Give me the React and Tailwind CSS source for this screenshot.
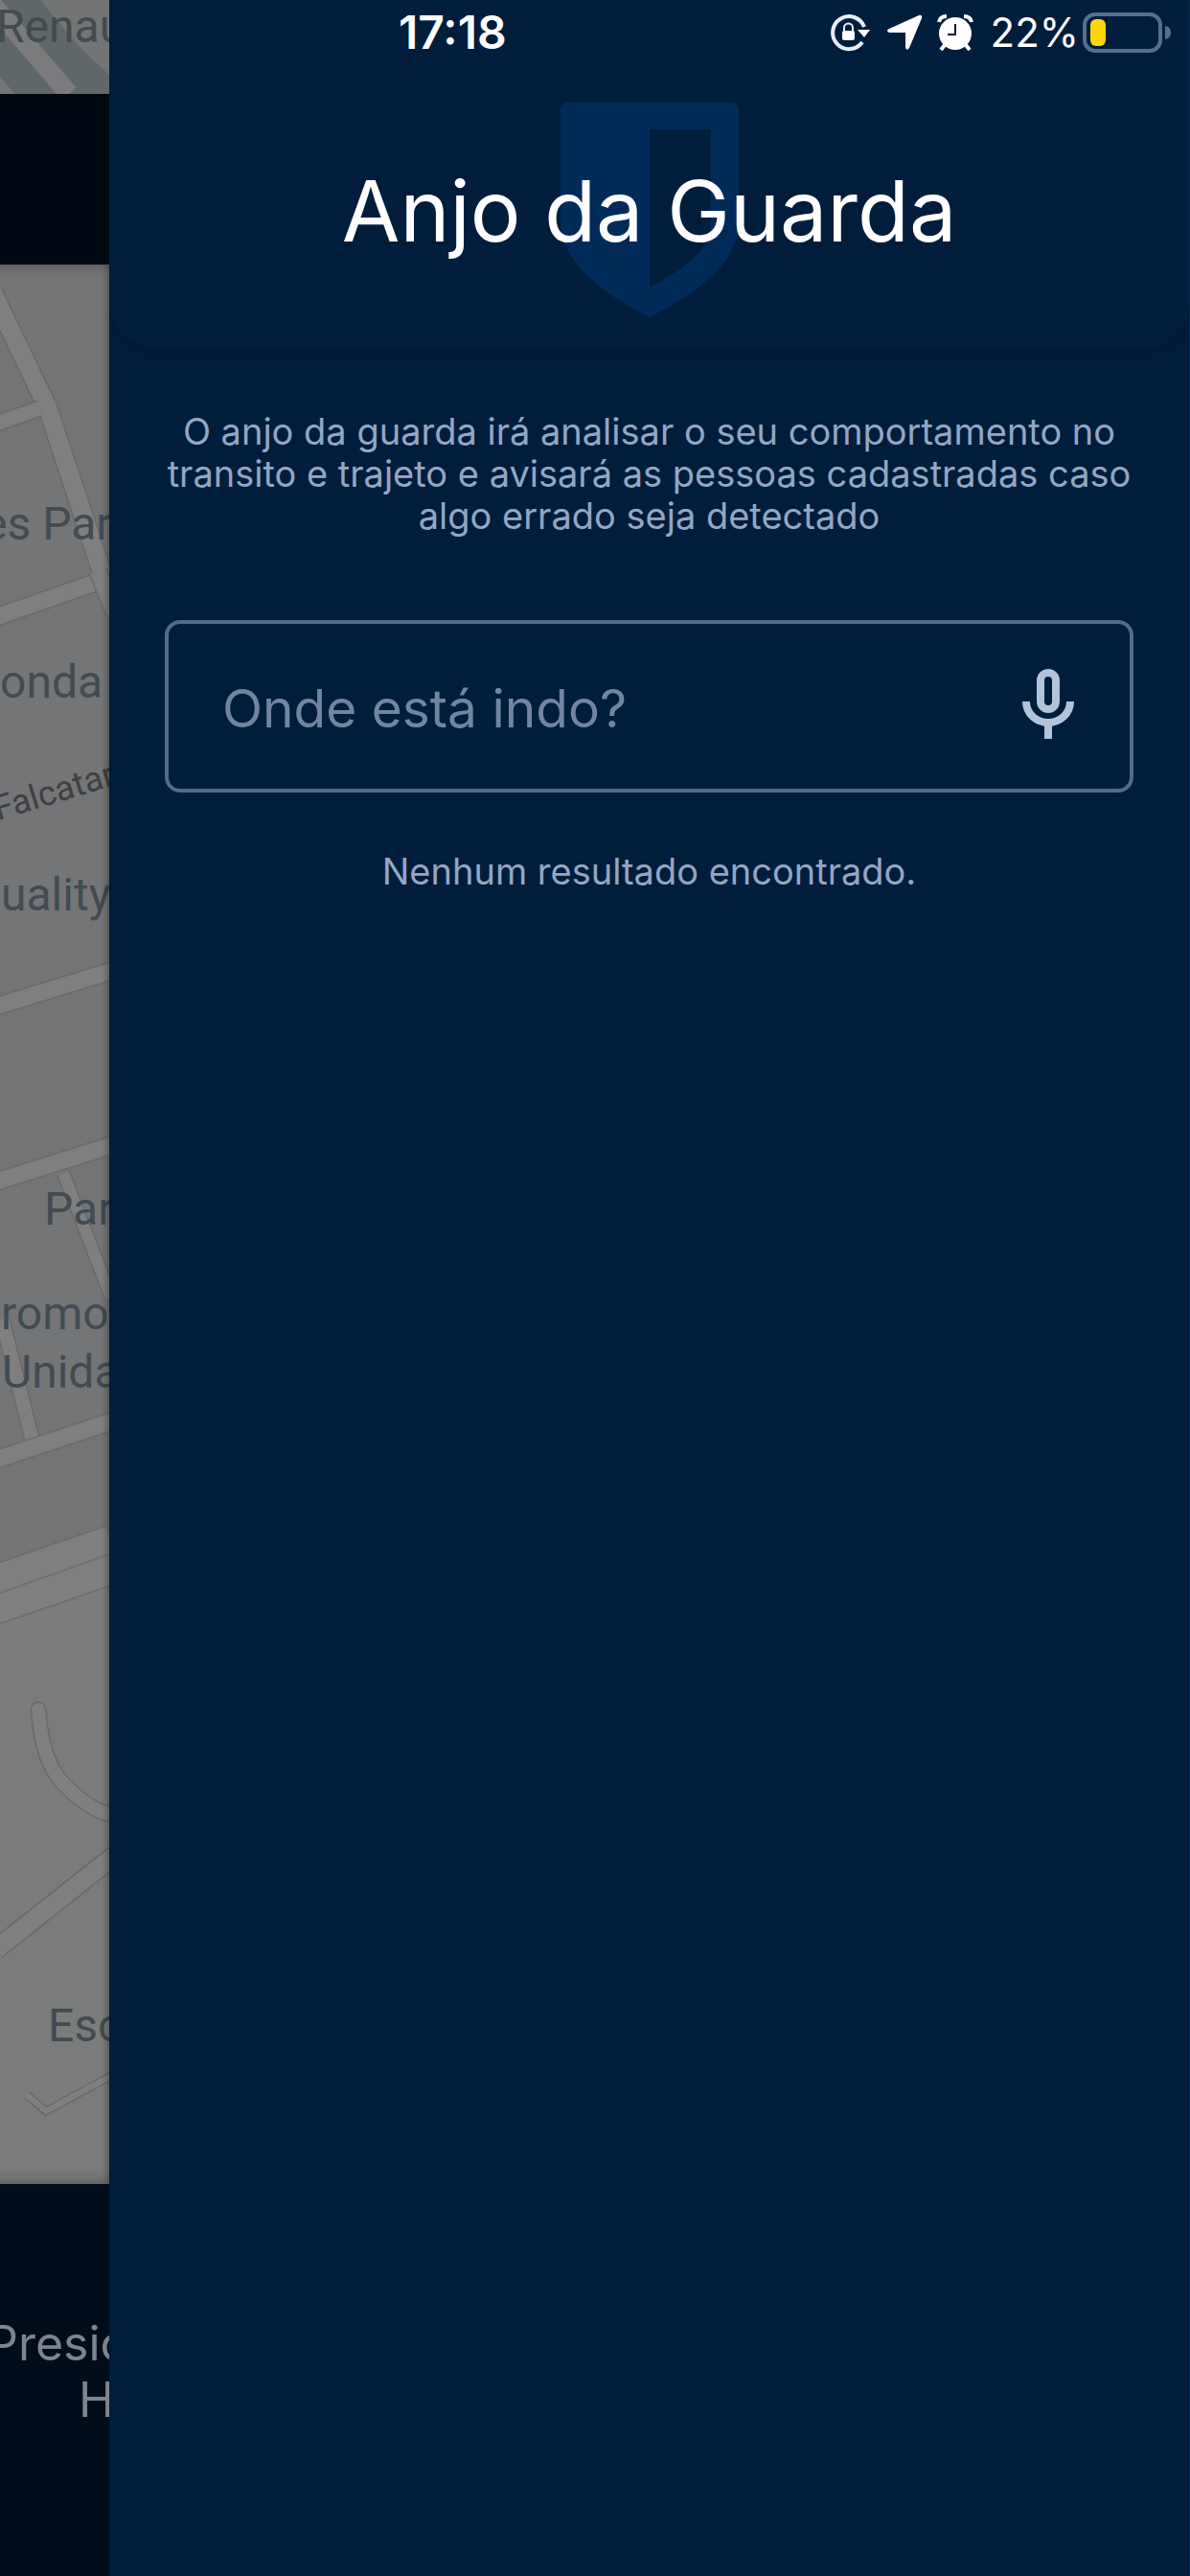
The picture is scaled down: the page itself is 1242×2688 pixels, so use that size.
import { useState } from 'react';

// Streets of the map, drawn as a dark casing with a lighter fill on top
const roads = [
  { d: 'M-8 28 L5 56 L50 150 L108 326', width: 22 },
  { d: 'M-4 166 L42 150', width: 18 },
  { d: 'M-4 368 L102 331', width: 20 },
  { d: 'M102 320 L120 364', width: 20 },
  { d: 'M-4 774 L120 736', width: 20 },
  { d: 'M66 948 L116 1078', width: 15 },
  { d: 'M2 1100 L34 1228', width: 17 },
  { d: 'M-4 957 L120 918', width: 20 },
  { d: 'M-4 1247 L120 1206', width: 20 },
  { d: 'M-14 1391 L120 1345', width: 62 },
  { d: 'M40 1508 C44 1560 56 1586 100 1612 Q108 1617 120 1617', width: 17, round: true },
  { d: 'M-4 1758 L120 1660', width: 22 },
  { d: 'M28 1910 L48 1927 L120 1888', width: 9 },
];

const labels = [
  { text: 'es Par', place: 'top-[243px] -left-[18px]' },
  { text: 'onda', place: 'top-[408px] left-[0px]' },
  { text: 'Quality', place: 'top-[630px] -left-[32px]' },
  { text: 'Par', place: 'top-[958px] left-[46px]' },
  { text: 'romo', place: 'top-[1067px] left-[1px]' },
  { text: 'Unida', place: 'top-[1128px] left-[2px]' },
  { text: 'Esc', place: 'top-[1810px] left-[50px]' },
];

const TopMap = () => (
  <div className="relative h-[98px] overflow-hidden bg-[#5f6768]">
    <svg className="absolute inset-0" width="114" height="98" viewBox="0 0 114 98" aria-hidden="true">
      <path d="M42 0 H114 V78 L80 46z" fill="#737575" />
      <path d="M-12 0 L72 98" stroke="#7b7a7d" strokeWidth="20" />
      <path d="M-4 76 L16 98 H-4z" fill="#737575" />
    </svg>
    <span className="absolute top-0 -left-[4px] text-[48px] leading-[56px] whitespace-nowrap text-[#424b50]">Renau</span>
  </div>
);

const MapArea = () => (
  <div className="relative min-h-[2003px] flex-1 overflow-hidden bg-[#747577]">
    <svg className="absolute top-0 left-0" width="114" height="2003" viewBox="0 0 114 2003" fill="none" aria-hidden="true">
      <path d="M0 1400 L114 1360 V2003 H0z" fill="#7a7c7b" />
      {roads.map((road) => (
        <g key={road.d} strokeLinecap={road.round ? 'round' : 'butt'}>
          <path d={road.d} stroke="#6a6a6b" strokeWidth={road.width} />
          <path d={road.d} stroke="#7f7f80" strokeWidth={road.width - 3} />
        </g>
      ))}
      <path d="M0 1386 L114 1346" stroke="#707071" strokeWidth="2" />
    </svg>
    {labels.map((label) => (
      <span
        key={label.text}
        className={`absolute text-[48px] leading-[56px] whitespace-nowrap text-[#424b52] ${label.place}`}
      >
        {label.text}
      </span>
    ))}
    <span className="absolute top-[548px] left-0 origin-bottom-left -rotate-17 text-[36px] leading-[40px] whitespace-nowrap text-[#3f4042]">
      Falcatar
    </span>
    <div className="absolute inset-y-0 right-0 -left-[20px] shadow-[inset_-2px_0_6px_rgba(0,0,0,0.2),inset_0_6px_10px_rgba(0,0,0,0.12),inset_0_-8px_10px_rgba(0,0,0,0.12)]" />
  </div>
);

// What stays visible of the home screen behind the open drawer
const HomeBehind = () => (
  <div className="flex w-[114px] shrink-0 flex-col overflow-hidden font-['Roboto',sans-serif]">
    <TopMap />
    <div className="h-[178px] bg-[#000811]" />
    <MapArea />
    <div className="h-[409px] bg-[#000c1b] pt-[137px] font-['Inter',sans-serif] text-[50px] leading-[59px] text-[#7d848d]">
      <p className="-ml-[13px] whitespace-nowrap">Presid</p>
      <p className="ml-[82px] whitespace-nowrap">H</p>
    </div>
  </div>
);

const StatusBar = () => (
  <div className="flex h-[68px] items-center justify-between pr-[19px] pl-[302px] text-white">
    <span className="text-[48px] leading-[56px] font-semibold">17:18</span>
    <div className="flex items-center">
      <svg width="42" height="40" viewBox="0 0 42 40" fill="none" aria-label="Rotação bloqueada">
        <path d="M33 30 A17 17 0 1 1 35 14" stroke="#e6eefa" strokeWidth="4" />
        <path d="M28 17 H41 L35 25z" fill="#fff" />
        <rect x="12" y="18" width="13" height="10" rx="2" fill="#fff" />
        <path d="M14 19 V15 a4 4 0 0 1 9 0 V19" stroke="#e6eefa" strokeWidth="2" />
      </svg>
      <svg className="ml-[16px]" width="38" height="38" viewBox="0 0 38 38" fill="#fff" aria-label="Localização">
        <path d="M34 1 Q38 0 37 4 L24 35 Q21 39 20 34 V19 H3 Q-1 17 3 15z" />
      </svg>
      <svg className="ml-[15px]" width="38" height="38" viewBox="0 0 38 38" aria-label="Alarme">
        <path d="M2 8 Q3 2 10 2 M28 2 Q35 2 36 8" stroke="#fff" strokeWidth="4" fill="none" />
        <path d="M8 32 L4 37 M30 32 L34 37" stroke="#fff" strokeWidth="4" />
        <circle cx="19" cy="20" r="17" fill="#fff" />
        <path d="M19 10 V21 H11" stroke="#001d3b" strokeWidth="2" fill="none" />
      </svg>
      <span className="ml-[18px] text-[42px] leading-[48px]">22%</span>
      <svg className="ml-[4px]" width="92" height="42" viewBox="0 0 92 42" fill="none" aria-label="Bateria">
        <rect x="2" y="2" width="79" height="38" rx="11" stroke="#566d8d" strokeWidth="4" />
        <rect x="8" y="7" width="16" height="28" rx="6" fill="#ffd60a" />
        <path d="M86 14 Q92 15 92 21 T86 28z" fill="#566d8d" />
      </svg>
    </div>
  </div>
);

const Shield = () => (
  <svg className="absolute top-[39px] left-1/2 -translate-x-1/2" width="186" height="224" viewBox="0 0 186 224" aria-hidden="true">
    <path
      d="M8 0 H178 Q186 0 186 8 V125 C186 165 145 198 93 224 C41 198 0 165 0 125 V8 Q0 0 8 0z M93 28 V192 C135 172 157 150 157 125 V28z"
      fill="#002b59"
      fillRule="evenodd"
    />
  </svg>
);

const MicIcon = () => (
  <svg width="54" height="74" viewBox="0 0 54 74" fill="none" stroke="#b3c3da" strokeWidth="8" aria-hidden="true">
    <rect x="19" y="4" width="16" height="38" rx="8" />
    <path d="M4 34 C4 47 15 56 27 56 S50 47 50 34" />
    <path d="M27 56 V73" />
  </svg>
);

const App = () => {
  const [destination, setDestination] = useState('');

  return (
    <div className="flex min-h-screen bg-[#001d3b]">
      <HomeBehind />
      <main className="min-w-0 flex-1 border-r border-[#00305f] font-['Inter',sans-serif]">
        <header className="h-[364px] rounded-b-[48px] shadow-[0_2px_8px_rgba(0,12,32,0.35)]">
          <StatusBar />
          <div className="relative">
            <Shield />
            <h1 className="relative pt-[102px] text-center text-[88px] leading-[100px] text-white">Anjo da Guarda</h1>
          </div>
        </header>

        <div className="px-[58px] pt-[64px] text-center text-[38px] leading-[44px] text-[#93a6c4]">
          <p className="-mx-4">
            O anjo da guarda irá analisar o seu comportamento no transito e trajeto e avisará as pessoas cadastradas caso
            algo errado seja detectado
          </p>

          <div className="mt-[87px] flex h-[180px] items-center rounded-[16px] border-4 border-[#516a8a] pr-[58px] pl-[56px]">
            <input
              type="text"
              aria-label="Onde está indo?"
              placeholder="Onde está indo?"
              value={destination}
              onChange={(e) => setDestination(e.target.value)}
              className="min-w-0 flex-1 bg-transparent pt-1 text-[55px] leading-[64px] text-white outline-none placeholder:text-[#7185a1]"
            />
            <button type="button" aria-label="Falar destino" className="pb-1">
              <MicIcon />
            </button>
          </div>

          <p className="mt-[60px]">Nenhum resultado encontrado.</p>
        </div>
      </main>
    </div>
  );
};

export default App;
